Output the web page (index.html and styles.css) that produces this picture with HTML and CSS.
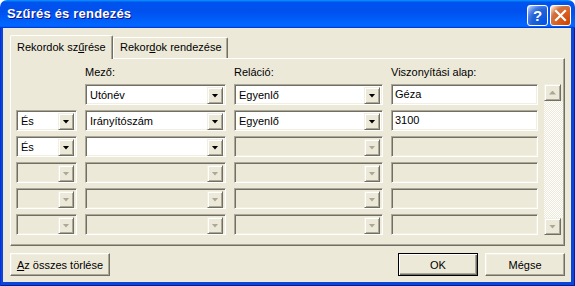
FILE: index.html
```html
<!DOCTYPE html>
<html lang="hu">
<head>
  <meta charset="UTF-8">
  <title>Szűrés és rendezés</title>
  <link rel="stylesheet" href="styles.css">
</head>
<body>
<div class="window">
  <div class="titlebar">
    <span class="title">Szűrés és rendezés</span>
    <div class="caption-buttons">
      <div class="cap help">?</div>
      <div class="cap close">
        <svg width="13" height="13" viewBox="0 0 13 13"><path d="M2 2 L11 11 M11 2 L2 11" stroke="#fff" stroke-width="2.2" stroke-linecap="square"/></svg>
      </div>
    </div>
  </div>

  <div class="frame">
    <div class="client">
      <div class="tabs">
        <div class="tab active">Rekordok sz<u>ű</u>rése</div>
        <div class="tab">Rekor<u>d</u>ok rendezése</div>
      </div>

      <div class="panel">
        <div class="filter-grid">
          <span></span>
          <span class="lbl">Mező:</span>
          <span class="lbl">Reláció:</span>
          <span class="lbl">Viszonyítási alap:</span>
          <span></span>

          <div class="scrollbar">
            <div class="sb-btn"><i class="arrow up"></i></div>
            <div class="sb-track"></div>
            <div class="sb-btn"><i class="arrow"></i></div>
          </div>

          <span></span>
          <div class="combo"><span class="val">Utónév</span><span class="drop"><i class="arrow"></i></span></div>
          <div class="combo"><span class="val">Egyenlő</span><span class="drop"><i class="arrow"></i></span></div>
          <div class="edit">Géza</div>

          <div class="combo"><span class="val">És</span><span class="drop"><i class="arrow"></i></span></div>
          <div class="combo"><span class="val">Irányítószám</span><span class="drop"><i class="arrow"></i></span></div>
          <div class="combo"><span class="val">Egyenlő</span><span class="drop"><i class="arrow"></i></span></div>
          <div class="edit">3100</div>

          <div class="combo"><span class="val">És</span><span class="drop"><i class="arrow"></i></span></div>
          <div class="combo"><span class="val"></span><span class="drop"><i class="arrow"></i></span></div>
          <div class="combo off"><span class="val"></span><span class="drop"><i class="arrow"></i></span></div>
          <div class="edit off"></div>

          <div class="combo off"><span class="val"></span><span class="drop"><i class="arrow"></i></span></div>
          <div class="combo off"><span class="val"></span><span class="drop"><i class="arrow"></i></span></div>
          <div class="combo off"><span class="val"></span><span class="drop"><i class="arrow"></i></span></div>
          <div class="edit off"></div>

          <div class="combo off"><span class="val"></span><span class="drop"><i class="arrow"></i></span></div>
          <div class="combo off"><span class="val"></span><span class="drop"><i class="arrow"></i></span></div>
          <div class="combo off"><span class="val"></span><span class="drop"><i class="arrow"></i></span></div>
          <div class="edit off"></div>

          <div class="combo off"><span class="val"></span><span class="drop"><i class="arrow"></i></span></div>
          <div class="combo off"><span class="val"></span><span class="drop"><i class="arrow"></i></span></div>
          <div class="combo off"><span class="val"></span><span class="drop"><i class="arrow"></i></span></div>
          <div class="edit off"></div>
        </div>
      </div>

      <div class="footer">
        <div class="btn wide"><u>A</u>z összes törlése</div>
        <div class="spacer"></div>
        <div class="btn default">OK</div>
        <div class="btn">Mégse</div>
      </div>
    </div>
  </div>
</div>
</body>
</html>
```

FILE: styles.css
```css
body { margin: 0; background: #fff; font: 11px "Liberation Sans", Arial, sans-serif; color: #000; }
.window { width: 575px; height: 286px; display: flex; flex-direction: column; }

/* title bar */
.titlebar { height: 28px; flex: none; display: flex; justify-content: space-between; padding: 0 4px 0 7px; border-radius: 7px 7px 0 0; background: linear-gradient(180deg, #0997ff, #0053ee 8%, #0050ee 40%, #06f 88%, #06f 93%, #005bff 95%, #003dd7 96%, #003dd7); }
.title { color: #fff; font: bold 13px "Liberation Sans", Arial, sans-serif; line-height: 28px; letter-spacing: 0.2px; text-shadow: 1px 1px #0f1089; }
.caption-buttons { display: flex; gap: 2px; margin-top: 5px; }
.cap { width: 21px; height: 21px; box-sizing: border-box; border: 1px solid #fff; border-radius: 3px; display: flex; align-items: center; justify-content: center; color: #fff; font: bold 15px "Liberation Sans", Arial, sans-serif; }
.help { background: radial-gradient(circle at 90% 90%, #0054e9 0, #2263d5 55%, #4479e4 70%, #a3bbec 90%, #fff 100%); }
.close { background: radial-gradient(circle at 90% 90%, #cc4600 0, #dc6527 55%, #cd7546 70%, #ffccb2 90%, #fff 100%); }

/* frame + client */
.frame { flex: 1; display: flex; padding: 0 4px 4px 3px; background: #0b46d8; box-shadow: inset 1px 0 #0831d9, inset -1px -1px #001ea0; }
.client { flex: 1; display: flex; flex-direction: column; background: #ece9d8; padding: 7px 6px 0 7px; }

/* tabs */
.tabs { display: flex; align-items: flex-end; height: 23px; }
.tab { box-sizing: border-box; height: 21px; padding: 3px 0 0 6px; background: #ece9d8; border: 1px solid #fff; border-bottom: none; border-right-color: #716f64; border-radius: 2px 2px 0 0; box-shadow: inset -1px 0 #aca899; }
.tab:first-child { width: 103px; }
.tab:last-child { width: 115px; }
.tab.active { height: 24px; margin-bottom: -1px; padding-top: 5px; position: relative; z-index: 1; }
.tab u, .btn u { text-decoration-thickness: 1px; text-underline-offset: 1px; }

.panel { box-sizing: border-box; height: 188px; padding: 7px 0 0 5px; border: 1px solid #716f64; border-top-color: #fff; border-left-color: #fff; box-shadow: inset -1px -1px #aca899; }

/* filter grid */
.filter-grid { display: grid; grid-template-columns: 61px 141px 149px 147px 17px; grid-template-rows: 13px repeat(6, 21px); column-gap: 8px; row-gap: 5px; }
.lbl { line-height: 13px; white-space: nowrap; }

.combo, .edit { box-sizing: border-box; height: 21px; border: 1px solid #aca899; border-right-color: #fff; border-bottom-color: #fff; box-shadow: inset 1px 1px #716f64, inset -1px -1px #f1efe2; background: #fff; }
.combo { display: flex; padding: 2px 2px 2px 2px; }
.combo .val { flex: 1; padding-left: 2px; line-height: 17px; }
.edit { padding: 2px 0 0 3px; line-height: 15px; }
.combo.off, .edit.off { background: #ece9d8; }

.drop, .sb-btn { box-sizing: border-box; width: 16px; height: 17px; flex: none; display: flex; align-items: center; justify-content: center; background: #ece9d8; border: 1px solid #716f64; border-top-color: #f1efe2; border-left-color: #f1efe2; box-shadow: inset 1px 1px #fff, inset -1px -1px #aca899; }
.arrow { display: block; width: 7px; height: 4px; background: #000; clip-path: polygon(0 0, 7px 0, 3.5px 4px); }
.arrow.up { clip-path: polygon(3.5px 0, 7px 4px, 0 4px); }
.off .arrow, .sb-btn .arrow { background: #aca899; }

.scrollbar { grid-column: 5; grid-row: 2 / 8; margin-left: -2px; display: flex; flex-direction: column; }
.sb-btn { width: 17px; }
.sb-track { flex: 1; background: repeating-conic-gradient(#fff 0 25%, #ece9d8 0 50%) 0 0 / 2px 2px; }

/* footer buttons */
.footer { display: flex; gap: 7px; margin-top: 7px; }
.spacer { flex: 1; }
.btn { box-sizing: border-box; width: 80px; height: 23px; display: flex; align-items: center; justify-content: center; background: #ece9d8; border: 1px solid #716f64; border-top-color: #fff; border-left-color: #fff; box-shadow: inset -1px -1px #aca899, inset 1px 1px #f1efe2; }
.btn.wide { width: 100px; }
.btn.default { border: 1px solid #000; box-shadow: inset 1px 1px #fff, inset -1px -1px #716f64, inset -2px -2px #aca899; }
```
